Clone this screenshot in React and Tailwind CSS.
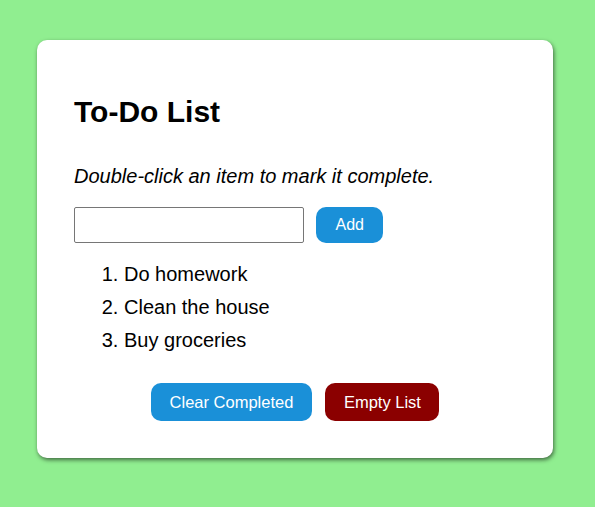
export default function App() {
  const items = ['Do homework', 'Clean the house', 'Buy groceries'];
  return (
    <div
      className="min-h-[507px] bg-[#90ee90] pt-[40px] px-[37px] pb-[49px]"
      style={{ fontFamily: '"Liberation Sans", Arial, sans-serif' }}
    >
      <div className="w-[516px] bg-white rounded-[10px] shadow-[1px_2px_4px_rgba(0,0,0,0.55)] px-[37px] pt-[55px] pb-[37px] h-[418px]">
        <h1 className="text-[30px] leading-[33px] font-bold text-black">To-Do List</h1>
        <p className="mt-[37px] text-[20px] leading-[23px] italic text-black">
          Double-click an item to mark it complete.
        </p>
        <div className="mt-[19px] flex items-center gap-[12px]">
          <input
            type="text"
            className="w-[230px] h-[36px] border border-[#767676] rounded-[2px] px-2 text-[16px] outline-none"
          />
          <button className="h-[36px] px-[19.5px] rounded-[10px] bg-[#1a90d8] text-white text-[16px]">
            Add
          </button>
        </div>
        <ol className="mt-[15px] list-decimal pl-[50px] text-[20px] leading-[33px] text-black">
          {items.map((t) => (
            <li key={t}>{t}</li>
          ))}
        </ol>
        <div className="mt-[26px] flex justify-center gap-[13px]">
          <button className="h-[38px] px-[19px] rounded-[10px] bg-[#1a90d8] text-white text-[16.5px]">
            Clear Completed
          </button>
          <button className="h-[38px] px-[18.5px] rounded-[10px] bg-[#8b0000] text-white text-[16.5px]">
            Empty List
          </button>
        </div>
      </div>
    </div>
  );
}
